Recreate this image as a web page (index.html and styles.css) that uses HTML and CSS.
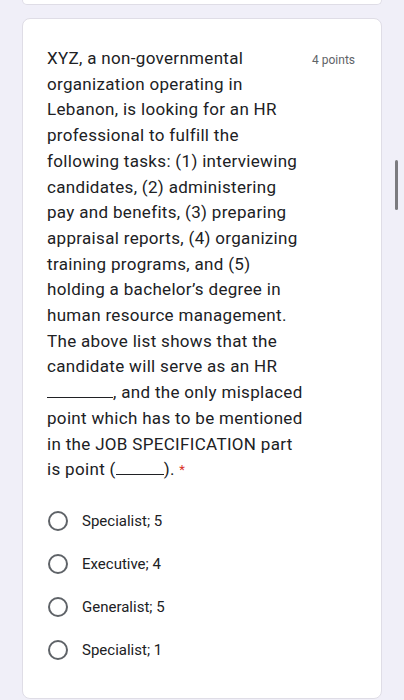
FILE: index.html
```html
<!DOCTYPE html>
<html lang="en">
<head>
    <meta charset="UTF-8">
    <meta name="viewport" content="width=device-width, initial-scale=1.0">
    <title>Question</title>
    <link rel="stylesheet" href="styles.css">
</head>
<body>
    <div class="form-container">
        <div class="card card-prev"></div>

        <div class="card question-card">
            <div class="question-header">
                <div class="question-text">
                    XYZ, a non-governmental<br>
                    organization operating in<br>
                    Lebanon, is looking for an HR<br>
                    professional to fulfill the<br>
                    following tasks: (1) interviewing<br>
                    candidates, (2) administering<br>
                    pay and benefits, (3) preparing<br>
                    appraisal reports, (4) organizing<br>
                    training programs, and (5)<br>
                    holding a bachelor’s degree in<br>
                    human resource management.<br>
                    The above list shows that the<br>
                    candidate will serve as an HR<br>
                    <span class="blank long"></span>, and the only misplaced<br>
                    point which has to be mentioned<br>
                    in the JOB SPECIFICATION part<br>
                    is point (<span class="blank short"></span>). <span class="required">*</span>
                </div>
                <div class="points">4 points</div>
            </div>

            <div class="options">
                <label class="option"><span class="radio"></span>Specialist; 5</label>
                <label class="option"><span class="radio"></span>Executive; 4</label>
                <label class="option"><span class="radio"></span>Generalist; 5</label>
                <label class="option"><span class="radio"></span>Specialist; 1</label>
            </div>
        </div>
    </div>

    <div class="scrollbar"></div>
</body>
</html>
```

FILE: styles.css
```css
body {
    margin: 0;
    font-family: Roboto, "Liberation Sans", sans-serif;
    background-color: #f0eff8;
    color: #202124;
}

.form-container {
    display: flex;
    flex-direction: column;
    gap: 13px;
    padding: 0 22px;
}

.card {
    background-color: white;
    border: 1px solid #dfdde6;
    border-radius: 8px;
}

.card-prev {
    height: 4px;
    border-top: none;
    border-top-left-radius: 0;
    border-top-right-radius: 0;
}

.question-card {
    padding: 27px 26px 30px 24px;
    height: 622px;
}

.question-header {
    display: flex;
    justify-content: space-between;
}

.question-text {
    font-size: 17px;
    line-height: 25.7px;
    letter-spacing: 0.32px;
}

.blank {
    display: inline-block;
    border-bottom: 1px solid #202124;
    vertical-align: baseline;
}

.blank.long {
    width: 66px;
}

.blank.short {
    width: 48px;
}

.required {
    color: #d93025;
    font-size: 13px;
    vertical-align: top;
}

.points {
    font-size: 12px;
    color: #5f6368;
    padding-top: 7px;
}

.options {
    display: flex;
    flex-direction: column;
    margin-top: 17px;
}

.option {
    display: flex;
    align-items: center;
    height: 43px;
    font-size: 15px;
    gap: 14px;
}

.radio {
    width: 16px;
    height: 16px;
    border: 2px solid #5f6368;
    border-radius: 50%;
    margin-left: 1px;
}

.scrollbar {
    position: fixed;
    top: 160px;
    right: 6px;
    width: 3px;
    height: 50px;
    background-color: #7b7b7f;
    border-radius: 2px;
}
```
